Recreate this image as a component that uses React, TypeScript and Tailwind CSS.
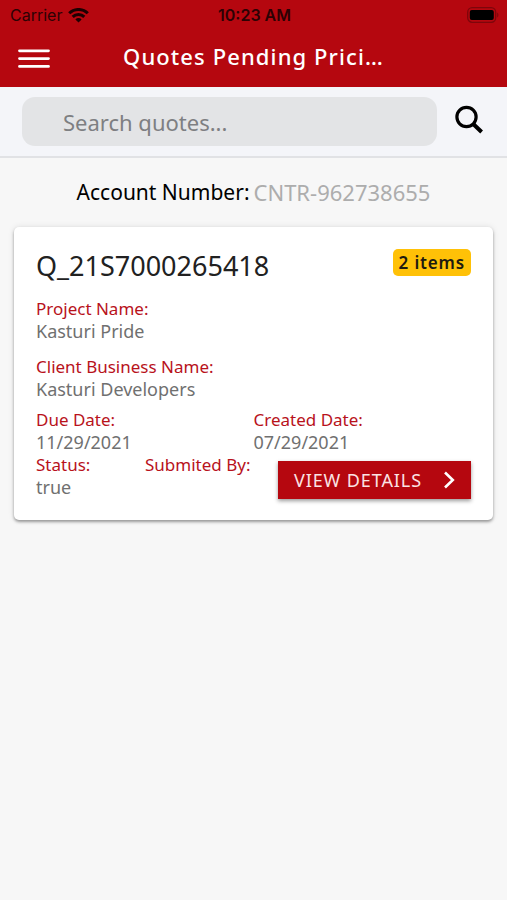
import React from 'react';

const quote = {
  id: 'Q_21S7000265418',
  items: '2 items',
  project: 'Kasturi Pride',
  client: 'Kasturi Developers',
  dueDate: '11/29/2021',
  createdDate: '07/29/2021',
  status: 'true',
};

function Field({ label, value }: { label: string; value?: string }) {
  return (
    <div className="min-w-0 leading-[23px] whitespace-nowrap">
      <dt className="text-[17px] leading-[23px] text-[#b8121b]">{label}</dt>
      <dd className="text-[18px] leading-[22px] text-[#707070]">{value}</dd>
    </div>
  );
}

function StatusBar() {
  return (
    <div className="grid h-[30px] grid-cols-3 items-center pr-[8px] pl-[10px] font-['Inter','Liberation_Sans',sans-serif] text-[16px] text-[#2c0204]">
      <div className="flex items-center gap-1.5">
        <span>Carrier</span>
        <svg className="h-[15px] w-[21px]" viewBox="0 0 21 15" fill="none" stroke="#1c0102" strokeWidth="3">
          <path d="M1.2 5.3a13.2 13.2 0 0 1 18.6 0" />
          <path d="M4.7 8.9a8.2 8.2 0 0 1 11.6 0" />
          <path d="M10.5 14.6 7.4 11.4a4.4 4.4 0 0 1 6.2 0z" fill="#1c0102" stroke="none" />
        </svg>
      </div>
      <span className="text-center font-semibold whitespace-nowrap">10:23 AM</span>
      <svg className="h-[16px] w-[33px] justify-self-end" viewBox="0 0 33 16">
        <rect x="1.7" y="0.7" width="28" height="14.6" rx="4.5" fill="none" stroke="#7d060b" strokeWidth="1.3" />
        <rect x="3.8" y="3" width="24" height="10" rx="2" fill="#000" />
        <path d="M31.2 5.5c1.6.8 1.6 4.2 0 5z" fill="#7d060b" />
      </svg>
    </div>
  );
}

export default function App() {
  return (
    <div className="min-h-screen bg-[#f7f7f7] font-['Noto_Sans','Open_Sans',sans-serif] text-black">
      <header className="bg-[#b5070f]">
        <StatusBar />
        <div className="grid h-[57px] grid-cols-[32px_1fr_32px] items-center px-[18px]">
          <button type="button" aria-label="Menu">
            <svg className="h-[20px] w-[32px]" viewBox="0 0 32 20" stroke="#fff" strokeWidth="2.8" strokeLinecap="round">
              <path d="M1.5 1.8h29M1.5 9.6h29M1.5 17.4h29" />
            </svg>
          </button>
          <h1 className="pb-1 text-center text-[22px] font-medium tracking-wider whitespace-nowrap text-white">
            Quotes Pending Prici…
          </h1>
        </div>
      </header>

      {/* Search */}
      <form className="flex h-[71px] items-center border-b-2 border-[#e1e2e5] bg-[#f4f5f9] px-[22px]">
        <input
          type="text"
          aria-label="Search quotes"
          placeholder="Search quotes..."
          className="h-[49px] min-w-0 flex-1 rounded-[13px] bg-[#e3e4e6] pr-4 pl-[41px] text-[22px] outline-none placeholder:text-[#7e7f82]"
        />
        <button type="button" aria-label="Search" className="ml-[18px] pb-1">
          <svg className="h-[30px] w-[30px]" viewBox="0 0 30 30" fill="none" stroke="#000" strokeWidth="3.2">
            <circle cx="11.5" cy="12" r="9.6" />
            <path d="M18 18.8 26.6 27" strokeWidth="4" />
          </svg>
        </button>
      </form>

      <main className="px-[14px]">
        <p className="flex h-[69px] items-center justify-center gap-1 whitespace-nowrap">
          <span className="text-[21px]">Account Number:</span>
          <span className="text-[22px] text-[#adadad]">CNTR-962738655</span>
        </p>

        <article className="rounded-[5px] bg-white px-[22px] pt-[22px] pb-[21px] shadow-[0_2px_3px_rgba(0,0,0,0.35),0_0_6px_rgba(0,0,0,0.1)]">
          <div className="flex h-[48px] items-start justify-between">
            <h2 className="text-[27px] leading-[34px] text-[#212121]">{quote.id}</h2>
            <span className="rounded-[5px] bg-[#ffc107] px-[6px] text-[17px] leading-[27px] font-semibold tracking-wider text-[#1d1a10]">
              {quote.items}
            </span>
          </div>

          <dl>
            <Field label="Project Name:" value={quote.project} />
            <div className="mt-[13px]">
              <Field label="Client Business Name:" value={quote.client} />
            </div>
            <div className="mt-2 grid grid-cols-2">
              <Field label="Due Date:" value={quote.dueDate} />
              <Field label="Created Date:" value={quote.createdDate} />
            </div>
          </dl>

          <div className="flex items-end justify-between">
            <dl className="grid flex-1 grid-cols-2 self-start">
              <Field label="Status:" value={quote.status} />
              <Field label="Submited By:" />
            </dl>
            <button
              type="button"
              className="mt-2 ml-6 flex h-[38px] w-[193px] items-center justify-between bg-[#b5070f] pr-4 pl-4 text-[18px] tracking-wider whitespace-nowrap text-[#fbe3e4] shadow-[0_2px_4px_rgba(0,0,0,0.4)]"
            >
              VIEW DETAILS
              <svg className="h-[18px] w-[12px]" viewBox="0 0 12 18" fill="none" stroke="#fff" strokeWidth="2.6">
                <path d="M2 1.5 9.8 9 2 16.5" />
              </svg>
            </button>
          </div>
        </article>
      </main>
    </div>
  );
}
